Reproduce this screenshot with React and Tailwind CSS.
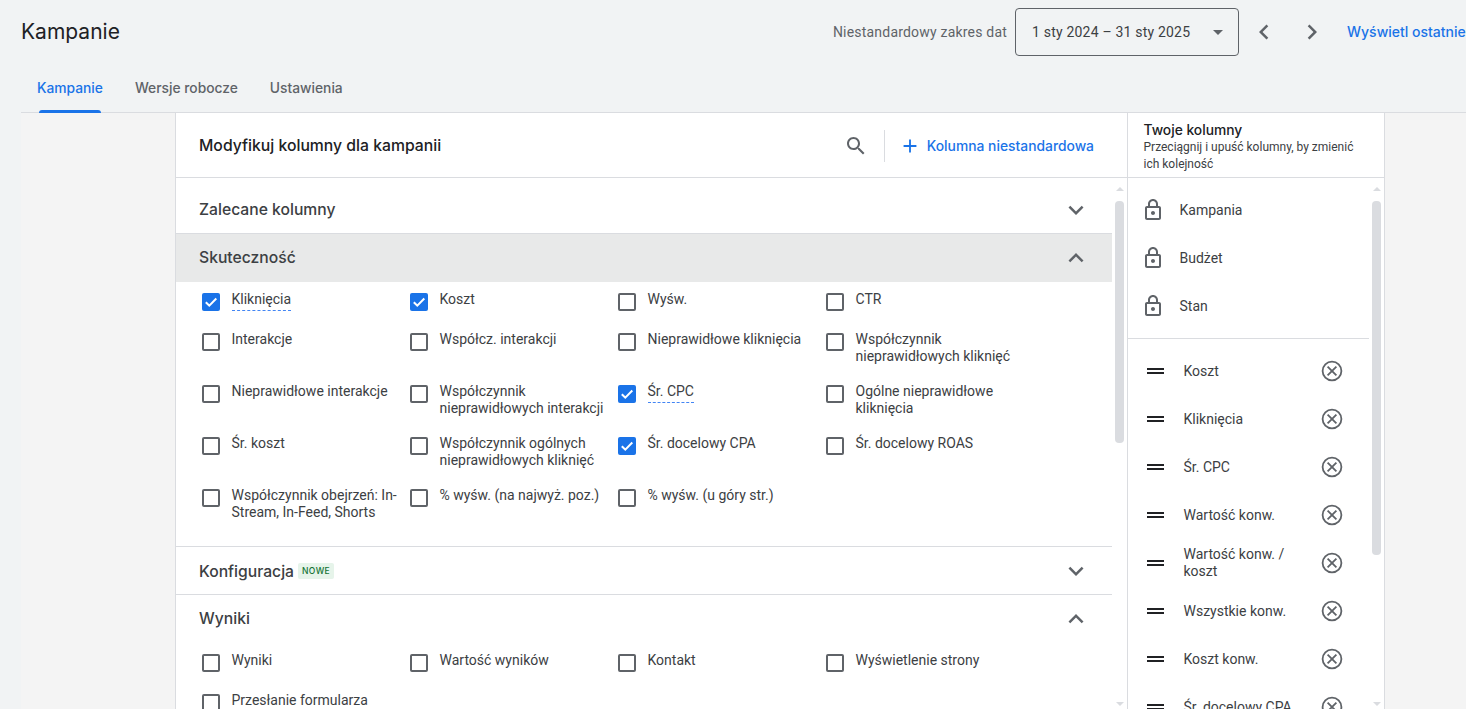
import React from "react";

const heading = "font-['Inter','Noto_Sans',sans-serif]";

const paths = {
  search:
    "M15.5 14h-.79l-.28-.27C15.41 12.59 16 11.11 16 9.5 16 5.91 13.09 3 9.5 3S3 5.91 3 9.5 5.91 16 9.5 16c1.61 0 3.09-.59 4.23-1.57l.27.28v.79l5 4.99L20.49 19l-4.99-5zm-6 0C7.01 14 5 11.99 5 9.5S7.01 5 9.5 5 14 7.01 14 9.5 11.99 14 9.5 14z",
  down: "M16.59 8.59L12 13.17 7.41 8.59 6 10l6 6 6-6z",
  up: "M7.41 15.41L12 10.83l4.59 4.58L18 14l-6-6-6 6z",
  left: "M15.41 7.41L14 6l-6 6 6 6 1.41-1.41L10.83 12z",
  right: "M8.59 16.59L10 18l6-6-6-6-1.41 1.41L13.17 12z",
  plus: "M19 13h-6v6h-2v-6H5v-2h6V5h2v6h6v2z",
  lock:
    "M18 8h-1V6c0-2.76-2.24-5-5-5S7 3.24 7 6v2H6c-1.1 0-2 .9-2 2v10c0 1.1.9 2 2 2h12c1.1 0 2-.9 2-2V10c0-1.1-.9-2-2-2zM9 6c0-1.66 1.34-3 3-3s3 1.34 3 3v2H9V6zm9 14H6V10h12v10zm-6-3c1.1 0 2-.9 2-2s-.9-2-2-2-2 .9-2 2 .9 2 2 2z",
};

function Icon({ name, className }) {
  return (
    <svg viewBox="0 0 24 24" fill="currentColor" className={className}>
      <path d={paths[name]} />
    </svg>
  );
}

function RemoveIcon() {
  return (
    <svg viewBox="0 0 24 24" fill="none" stroke="#5f6368" strokeWidth="1.8" className="ml-[18px] h-[24px] w-[24px] shrink-0">
      <circle cx="12" cy="12" r="9.4" />
      <path d="M7.6 7.6l8.8 8.8M16.4 7.6l-8.8 8.8" />
    </svg>
  );
}

const performance = [
  [
    { label: "Kliknięcia", checked: true, dashed: true },
    { label: "Koszt", checked: true },
    { label: "Wyśw." },
    { label: "CTR" },
  ],
  [
    { label: "Interakcje" },
    { label: "Współcz. interakcji" },
    { label: "Nieprawidłowe kliknięcia" },
    { label: "Współczynnik nieprawidłowych kliknięć" },
  ],
  [
    { label: "Nieprawidłowe interakcje" },
    { label: "Współczynnik nieprawidłowych interakcji" },
    { label: "Śr. CPC", checked: true, dashed: true },
    { label: "Ogólne nieprawidłowe kliknięcia" },
  ],
  [
    { label: "Śr. koszt" },
    { label: "Współczynnik ogólnych nieprawidłowych kliknięć" },
    { label: "Śr. docelowy CPA", checked: true },
    { label: "Śr. docelowy ROAS" },
  ],
  [
    { label: "Współczynnik obejrzeń: In-Stream, In-Feed, Shorts" },
    { label: "% wyśw. (na najwyż. poz.)" },
    { label: "% wyśw. (u góry str.)" },
  ],
];

const results = [
  [
    { label: "Wyniki" },
    { label: "Wartość wyników" },
    { label: "Kontakt" },
    { label: "Wyświetlenie strony" },
  ],
  [{ label: "Przesłanie formularza" }],
];

const locked = ["Kampania", "Budżet", "Stan"];
const selected = [
  "Koszt",
  "Kliknięcia",
  "Śr. CPC",
  "Wartość konw.",
  "Wartość konw. / koszt",
  "Wszystkie konw.",
  "Koszt konw.",
  "Śr. docelowy CPA",
];

function Checkbox({ checked }) {
  if (checked) {
    return (
      <span className="mt-[2px] flex h-[18px] w-[18px] shrink-0 items-center justify-center rounded-[2px] bg-[#1a73e8]">
        <svg viewBox="0 0 18 18" className="h-[18px] w-[18px]" fill="none" stroke="white" strokeWidth="2">
          <path d="M3.8 9.2l3.5 3.5 7-7.2" />
        </svg>
      </span>
    );
  }
  return <span className="mt-[2px] h-[18px] w-[18px] shrink-0 rounded-[2px] border-2 border-[#5f6368]" />;
}

function Option({ item }) {
  return (
    <div className="flex w-[208px] items-start gap-[11.5px]">
      <Checkbox checked={item.checked} />
      <span className="w-[174px] text-sm leading-[17px] text-[#3c4043]">
        <span className={item.dashed ? "inline-block h-[20px] border-b border-dashed border-[#4285f4]" : ""}>
          {item.label}
        </span>
      </span>
    </div>
  );
}

function Section({ title, open, active, badge, height = "h-[48px]", border = true, children }) {
  return (
    <div className={border ? "border-b border-[#dadce0]" : ""}>
      <div
        className={`flex ${height} items-center justify-between pl-[23px] pr-[24px] ${
          active ? "bg-[#e8e9e9]" : ""
        }`}
      >
        <div className={`flex items-center gap-[4px] ${badge ? "mt-[2px]" : ""}`}>
          <span className={`${heading} text-[15.7px] font-medium text-[#3c4043]`}>{title}</span>
          {badge && (
            <span className={`${heading} rounded-[2px] bg-[#e6f4ea] px-[4px] py-[1px] text-[8.5px] leading-[14px] font-medium tracking-[0.4px] text-[#137333]`}>
              {badge}
            </span>
          )}
        </div>
        <Icon name={open ? "up" : "down"} className="h-[24px] w-[24px] scale-125 text-[#5f6368]" />
      </div>
      {children}
    </div>
  );
}

function OptionGrid({ rows, heights }) {
  return (
    <div className="pl-[26px] pt-[9px]">
      {rows.map((row, i) => (
        <div key={i} className={`flex ${heights[i]}`}>
          {row.map((item) => (
            <Option key={item.label} item={item} />
          ))}
        </div>
      ))}
    </div>
  );
}

function Scrollbar({ thumb }) {
  return (
    <div className="flex w-[15px] shrink-0 flex-col items-center">
      <div className="mt-[9px] h-0 w-0 border-x-[4px] border-b-[4px] border-x-transparent border-b-[#dadce0]" />
      <div className={`mt-[10px] w-[9px] shrink-0 rounded-[4px] bg-[#dadce0] ${thumb}`} />
      <div className="mt-auto mb-[3px] h-0 w-0 border-x-[4px] border-t-[4px] border-x-transparent border-t-[#dadce0]" />
    </div>
  );
}

export default function App() {
  return (
    <div className="flex h-[709px] flex-col overflow-hidden bg-[#f1f3f4] font-['Roboto',sans-serif]">
      <header className="h-[113px] shrink-0">
        <div className="flex h-[64px] items-center overflow-hidden pl-[21px]">
          <h1 className={`${heading} -mt-[1px] text-[21px] font-normal text-[#202124]`}>Kampanie</h1>
          <div className="ml-auto flex shrink-0 items-center">
            <span className="text-sm tracking-[0.2px] text-[#5f6368]">Niestandardowy zakres dat</span>
            <div className="ml-[8px] flex h-[48px] w-[224px] items-center justify-between rounded-[4px] border border-[#5f6368] pl-[16px] pr-[15px]">
              <span className="text-sm tracking-[0.2px] text-[#3c4043]">1 sty 2024 – 31 sty 2025</span>
              <span className="h-0 w-0 border-x-[5px] border-t-[5px] border-x-transparent border-t-[#5f6368]" />
            </div>
            <Icon name="left" className="ml-[13px] h-[24px] w-[24px] scale-125 text-[#5f6368]" />
            <Icon name="right" className="ml-[24px] h-[24px] w-[24px] scale-125 text-[#5f6368]" />
            <span className={`${heading} ml-[23px] w-[119px] overflow-hidden text-sm font-medium whitespace-nowrap text-[#1a73e8]`}>
              Wyświetl ostatnie
            </span>
          </div>
        </div>
        <nav className={`${heading} ml-[21px] flex h-[49px] gap-[32px] border-b border-[#dadce0] pl-[16px] text-[13.8px] font-medium text-[#5f6368]`}>
          <div className="relative pt-[14px] text-[#1a73e8]">
            Kampanie
            <span className="absolute right-[2px] bottom-[-1px] left-[2px] h-[3px] rounded-t-[3px] bg-[#1a73e8]" />
          </div>
          <div className="pt-[14px]">Wersje robocze</div>
          <div className="pt-[14px]">Ustawienia</div>
        </nav>
      </header>

      <main className="ml-[21px] flex min-h-0 flex-1 bg-[#f4f4f4] pl-[154px]">
        <div className="flex w-[1210px] border-x border-[#dadce0] bg-white">
          <div className="flex w-[952px] shrink-0 flex-col border-r border-[#dadce0]">
            <div className="flex h-[65px] shrink-0 items-center border-b border-[#dadce0] pl-[23px] pr-[33px] pt-[2px]">
              <h2 className={`${heading} text-[15.75px] font-medium text-[#202124]`}>Modyfikuj kolumny dla kampanii</h2>
              <Icon name="search" className="ml-auto h-[24px] w-[24px] text-[#5f6368]" />
              <span className="ml-[16px] h-[32px] w-px bg-[#dadce0]" />
              <Icon name="plus" className="ml-[14px] h-[22px] w-[22px] text-[#1a73e8]" />
              <span className={`${heading} ml-[6px] text-[13.85px] font-medium text-[#1a73e8]`}>Kolumna niestandardowa</span>
            </div>
            <div className="flex min-h-0 flex-1 overflow-hidden">
              <div className="min-w-0 flex-1">
                <div className="h-[56px] border-b border-[#dadce0] pt-[8px]">
                  <div className="flex h-[48px] items-center justify-between pl-[23px] pr-[24px]">
                    <span className={`${heading} text-[15.7px] font-medium text-[#3c4043]`}>Zalecane kolumny</span>
                    <Icon name="down" className="h-[24px] w-[24px] scale-125 text-[#5f6368]" />
                  </div>
                </div>
                <Section title="Skuteczność" open active>
                  <OptionGrid
                    rows={performance}
                    heights={["h-[40px]", "h-[52px]", "h-[52px]", "h-[52px]", "h-[59px]"]}
                  />
                </Section>
                <Section title="Konfiguracja" badge="NOWE" height="h-[47px]" />
                <Section title="Wyniki" open border={false}>
                  <OptionGrid rows={results} heights={["h-[40px]", "h-[40px]"]} />
                </Section>
              </div>
              <Scrollbar thumb="h-[242px]" />
            </div>
          </div>

          <div className="flex min-w-0 flex-1 flex-col">
            <div className="h-[65px] shrink-0 border-b border-[#dadce0] pl-[15.5px] pt-[8px]">
              <h3 className={`${heading} text-[13.8px] leading-[18px] font-medium text-[#202124]`}>Twoje kolumny</h3>
              <p className="w-[220px] text-xs leading-[17px] text-[#3c4043]">
                Przeciągnij i upuść kolumny, by zmienić ich kolejność
              </p>
            </div>
            <div className="flex min-h-0 flex-1 overflow-hidden">
              <div className="min-w-0 flex-1">
                <div className="border-b border-[#dadce0] pb-[8px] pt-[8px]">
                  {locked.map((name) => (
                    <div key={name} className="flex h-[48px] items-center pl-[13px] text-sm text-[#3c4043]">
                      <Icon name="lock" className="h-[24px] w-[24px] text-[#5f6368]" />
                      <span className="ml-[14.5px]">{name}</span>
                    </div>
                  ))}
                </div>
                <div className="pt-[8px]">
                  {selected.map((name) => (
                    <div key={name} className="flex h-[48px] shrink-0 items-center pl-[19px] text-sm leading-[17px] text-[#3c4043]">
                      <span className="flex h-[6px] w-[17px] shrink-0 flex-col justify-between">
                        <span className="h-[2px] bg-[#202124]" />
                        <span className="h-[2px] bg-[#202124]" />
                      </span>
                      <span className="ml-[19.5px] w-[118.5px]">{name}</span>
                      <RemoveIcon />
                    </div>
                  ))}
                </div>
              </div>
              <Scrollbar thumb="h-[354px]" />
            </div>
          </div>
        </div>
      </main>
    </div>
  );
}
